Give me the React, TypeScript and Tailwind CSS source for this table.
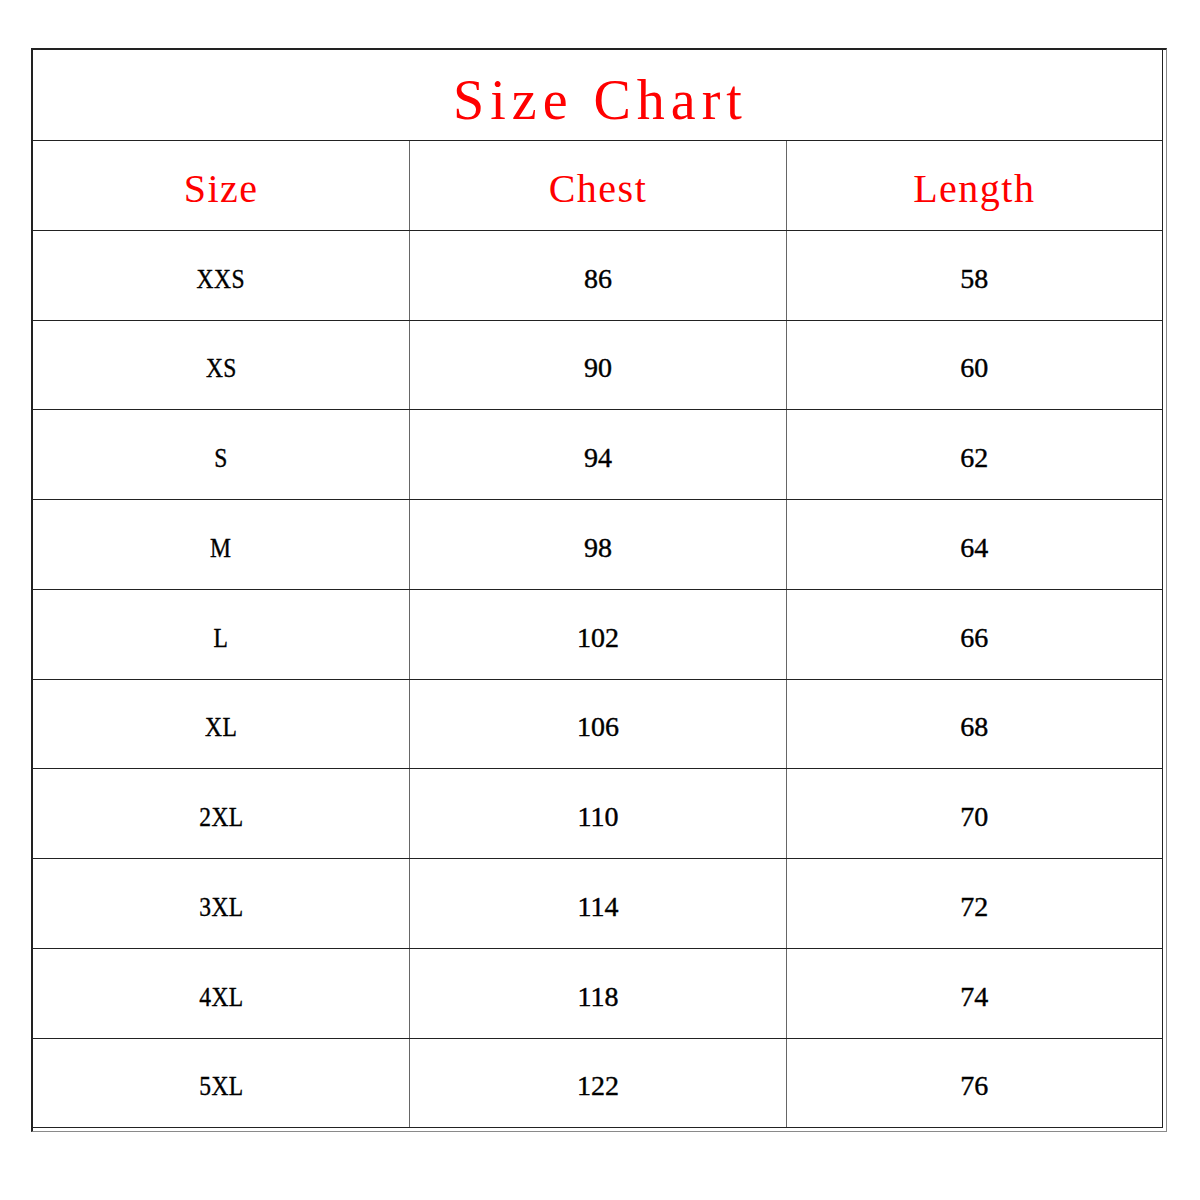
const rows = [
  { size: "XXS", chest: "86", length: "58", h: "h-[90px]" },
  { size: "XS", chest: "90", length: "60", h: "h-[89px]" },
  { size: "S", chest: "94", length: "62", h: "h-[90px]" },
  { size: "M", chest: "98", length: "64", h: "h-[90px]" },
  { size: "L", chest: "102", length: "66", h: "h-[90px]" },
  { size: "XL", chest: "106", length: "68", h: "h-[89px]" },
  { size: "2XL", chest: "110", length: "70", h: "h-[90px]" },
  { size: "3XL", chest: "114", length: "72", h: "h-[90px]" },
  { size: "4XL", chest: "118", length: "74", h: "h-[90px]" },
  { size: "5XL", chest: "122", length: "76", h: "h-[88px]" },
];

const cell =
  "flex items-center justify-center text-[28px] leading-none text-black [-webkit-text-stroke:0.4px_black]";

export default function App() {
  return (
    <div className="w-[1200px] h-[1200px] bg-white pt-[48px] pl-[31px] font-['Liberation_Serif',serif]">
      {/* outer frame: dark left/top, faint double line right/bottom */}
      <div className="w-[1136px] border-l-2 border-t-2 border-[#222] border-r border-b border-r-[#8a8a8a] border-b-[#8a8a8a] pr-[3px] pb-[3px]">
        <div className="border-r border-b border-[#222]">
          {/* title */}
          <div className="h-[91px] flex items-center justify-center border-b border-[#222]">
            <span className="text-[56px] leading-none text-[#ff0000] tracking-[6px] pl-[6px] pt-[10px]">
              Size Chart
            </span>
          </div>

          {/* header */}
          <div className="grid grid-cols-3 h-[90px] border-b border-[#222]">
            {["Size", "Chest", "Length"].map((h, i) => (
              <div
                key={h}
                className={`flex items-center justify-center text-[40px] leading-none text-[#ff0000] tracking-[1.5px] ${
                  i > 0 ? "border-l border-[#666]" : ""
                }`}
              >
                <span className="pt-[6px]">{h}</span>
              </div>
            ))}
          </div>

          {rows.map((r, idx) => (
            <div
              key={r.size}
              className={`grid grid-cols-3 ${r.h} ${idx < rows.length - 1 ? "border-b border-[#222]" : ""}`}
            >
              <div className={cell}>
                <span className="inline-block pt-[6px] scale-x-[0.84] tracking-[0.5px]">{r.size}</span>
              </div>
              <div className={`${cell} border-l border-[#666]`}>
                <span className="pt-[6px]">{r.chest}</span>
              </div>
              <div className={`${cell} border-l border-[#666]`}>
                <span className="pt-[6px]">{r.length}</span>
              </div>
            </div>
          ))}
        </div>
      </div>
    </div>
  );
}
